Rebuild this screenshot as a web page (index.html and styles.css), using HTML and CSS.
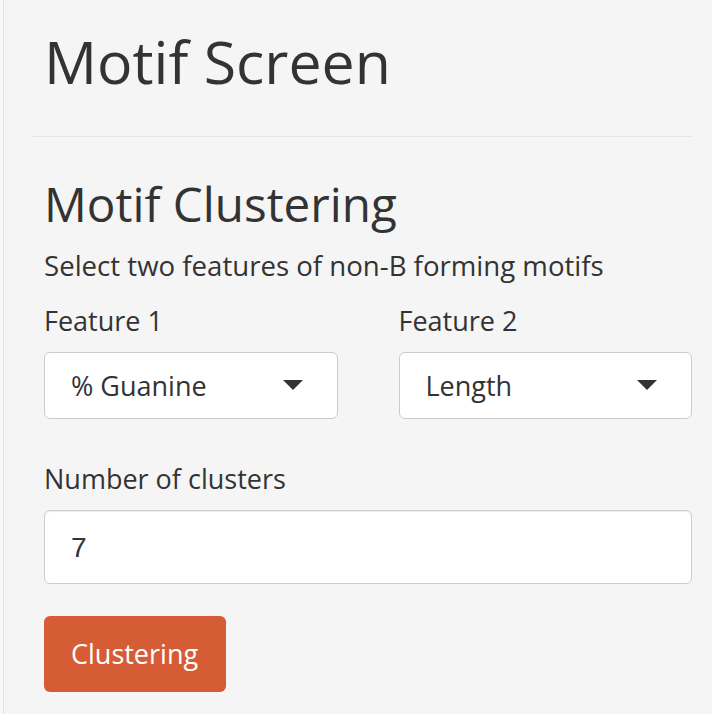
FILE: index.html
```html
<!DOCTYPE html>
<html>
<head>
<meta charset="utf-8">
<link rel="stylesheet" href="styles.css">
</head>
<body>
<div class="well">
  <h2 class="title">Motif Screen</h2>
  <hr class="rule">
  <h3 class="subtitle">Motif Clustering</h3>
  <p class="help">Select two features of non-B forming motifs</p>
  <div class="pair">
    <div class="field">
      <label class="label">Feature 1</label>
      <div class="select"><span>% Guanine</span><span class="caret"></span></div>
    </div>
    <div class="field">
      <label class="label">Feature 2</label>
      <div class="select"><span>Length</span><span class="caret"></span></div>
    </div>
  </div>
  <div class="field">
    <label class="label">Number of clusters</label>
    <div class="input">7</div>
  </div>
  <button class="btn">Clustering</button>
</div>
</body>
</html>
```

FILE: styles.css
```css
html, body {
  margin: 0;
  padding: 0;
  background: #f8f8f8;
  height: 100%;
  overflow: hidden;
}
.well {
  margin-left: 3px;
  border-left: 1px solid #e3e3e3;
  background: #f5f5f5;
  padding: 26px 20px 40px 40px;
  min-height: 714px;
  box-sizing: border-box;
  color: #333;
  font-family: "Open Sans", sans-serif;
  display: flex;
  flex-direction: column;
}
.title {
  margin: 0;
  font-size: 59px;
  line-height: 70px;
  font-weight: 400;
}
.rule {
  margin: 40px 0 0 -12px;
  border: 0;
  height: 1px;
  background: #e6e6e6;
}
.subtitle {
  margin: 39px 0 0 0;
  font-size: 47.6px;
  line-height: 56px;
  font-weight: 400;
}
.help {
  margin: 13px 0 0 0;
  font-size: 27.6px;
  line-height: 40px;
}
.pair {
  display: grid;
  grid-template-columns: 1fr 1fr;
  column-gap: 61px;
  margin-top: 17px;
}
.field {
  display: flex;
  flex-direction: column;
}
.pair + .field {
  margin-top: 41px;
}
.label {
  font-size: 27px;
  line-height: 38px;
  margin-bottom: 12px;
}
.select {
  height: 67px;
  box-sizing: border-box;
  border: 1px solid #ccc;
  border-radius: 6px;
  background: #fff;
  display: flex;
  align-items: center;
  justify-content: space-between;
  padding: 0 34px 0 26px;
  font-size: 27px;
  line-height: 65px;
}
.caret {
  width: 0;
  height: 0;
  border-left: 10px solid transparent;
  border-right: 10px solid transparent;
  border-top: 10px solid #333;
  margin-top: -2px;
}
.input {
  height: 74px;
  box-sizing: border-box;
  border: 1px solid #ccc;
  border-radius: 6px;
  background: #fff;
  box-shadow: inset 0 1px 1px rgba(0,0,0,0.075);
  padding: 2px 26px 0 26px;
  font-family: "Liberation Sans", Arial, sans-serif;
  font-size: 28px;
  line-height: 70px;
}
.btn {
  align-self: flex-start;
  margin-top: 32px;
  height: 76px;
  padding: 0 28px 0 27px;
  border: 0;
  border-radius: 6px;
  background: #d65c36;
  color: #fff;
  font-family: "Open Sans", sans-serif;
  font-size: 27px;
  line-height: 76px;
}
```
